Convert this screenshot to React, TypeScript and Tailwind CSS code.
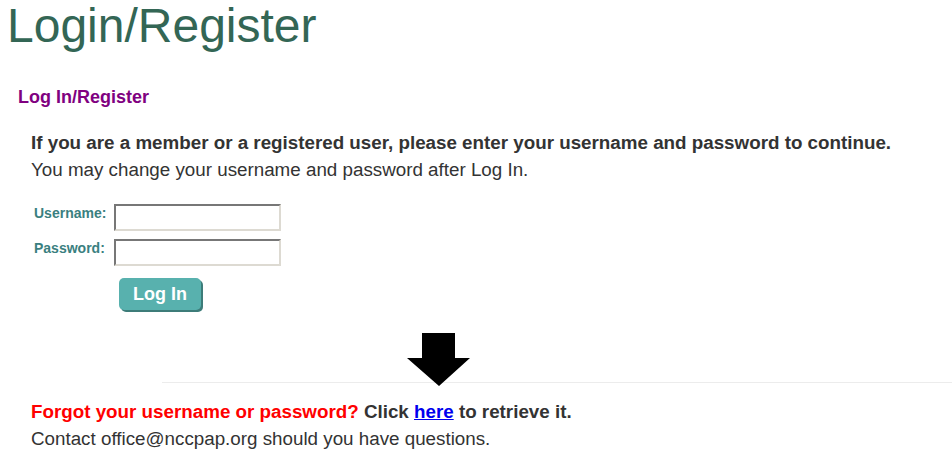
export default function App() {
  return (
    <div className="w-[952px] h-[461px] bg-white overflow-hidden font-['Liberation_Sans',Arial,sans-serif]">
      {/* Page title */}
      <h1 className="h-[56px] pt-[2px] pl-[7px] text-[48px] leading-[48px] text-[#336655] font-normal">
        Login/Register
      </h1>

      <h2 className="mt-[29px] pl-[18px] text-[18px] leading-[24px] font-bold text-[#800080]">
        Log In/Register
      </h2>

      {/* Intro */}
      <div className="mt-[20px] pl-[31px] text-[18.8px] leading-[27px] text-[#333333]">
        <p className="font-bold">
          If you are a member or a registered user, please enter your username and password to continue.
        </p>
        <p>You may change your username and password after Log In.</p>
      </div>

      {/* Login form */}
      <form className="mt-[21px] pl-[34px] flex flex-col gap-[8px]" onSubmit={(e) => e.preventDefault()}>
        <div className="flex items-start">
          <label className="w-[80px] pt-[1px] text-[14px] leading-[16px] font-bold text-[#3a7f80]">
            Username:
          </label>
          <input
            type="text"
            className="w-[167px] h-[27px] border-2 border-t-[#777777] border-l-[#777777] border-b-[#dddad2] border-r-[#dddad2] bg-white outline-none"
          />
        </div>
        <div className="flex items-start">
          <label className="w-[80px] pt-[1px] text-[14px] leading-[16px] font-bold text-[#3a7f80]">
            Password:
          </label>
          <input
            type="password"
            className="w-[167px] h-[27px] border-2 border-t-[#777777] border-l-[#777777] border-b-[#dddad2] border-r-[#dddad2] bg-white outline-none"
          />
        </div>
        <div className="pl-[85px] mt-[4px]">
          <button
            type="submit"
            className="w-[82px] h-[32px] rounded-[5px] bg-[#58b1ae] text-white text-[18px] font-bold shadow-[2px_2px_0_#3d7c79]"
          >
            Log In
          </button>
        </div>
      </form>

      {/* Arrow pointing to recovery line */}
      <div className="mt-[23px] h-[49px] pl-[407px]">
        <svg width="64" height="54" viewBox="0 0 64 54" className="relative z-10 block">
          <path d="M15 0 H48 V25 H63 L32 53 L0 25 H15 Z" fill="#000000" />
        </svg>
      </div>
      <div className="ml-[162px] h-px bg-[#ececec]" />

      {/* Recovery */}
      <div className="mt-[15px] pl-[31px] text-[18.8px] leading-[27px] text-[#333333]">
        <p className="font-bold">
          <span className="text-[#ff0000]">Forgot your username or password?</span> Click{' '}
          <a href="#" className="text-[#0000ee] underline">
            here
          </a>{' '}
          to retrieve it.
        </p>
        <p>Contact office@nccpap.org should you have questions.</p>
      </div>
    </div>
  );
}
